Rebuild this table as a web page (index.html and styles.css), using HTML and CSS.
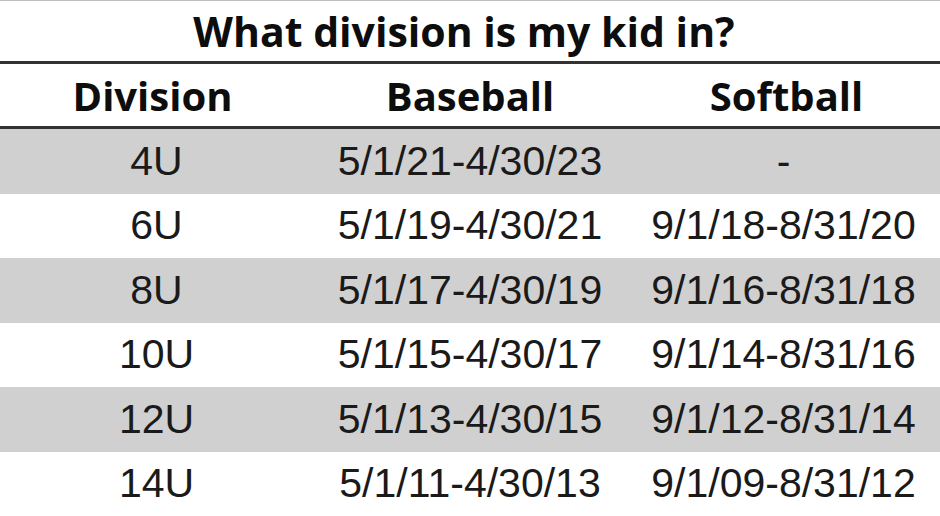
FILE: index.html
```html
<!DOCTYPE html>
<html>
<head>
<meta charset="utf-8">
<link rel="stylesheet" href="styles.css">
</head>
<body>
<div class="sheet">
  <div class="title">What division is my kid in?</div>
  <div class="row head">
    <div class="cell">Division</div>
    <div class="cell">Baseball</div>
    <div class="cell">Softball</div>
  </div>
  <div class="row shade"><div class="cell">4U</div><div class="cell">5/1/21-4/30/23</div><div class="cell">-</div></div>
  <div class="row"><div class="cell">6U</div><div class="cell">5/1/19-4/30/21</div><div class="cell">9/1/18-8/31/20</div></div>
  <div class="row shade"><div class="cell">8U</div><div class="cell">5/1/17-4/30/19</div><div class="cell">9/1/16-8/31/18</div></div>
  <div class="row"><div class="cell">10U</div><div class="cell">5/1/15-4/30/17</div><div class="cell">9/1/14-8/31/16</div></div>
  <div class="row shade"><div class="cell">12U</div><div class="cell">5/1/13-4/30/15</div><div class="cell">9/1/12-8/31/14</div></div>
  <div class="row"><div class="cell">14U</div><div class="cell">5/1/11-4/30/13</div><div class="cell">9/1/09-8/31/12</div></div>
</div>
</body>
</html>
```
FILE: styles.css
```css
html, body {
  margin: 0;
  padding: 0;
  background: #ffffff;
  overflow: hidden;
}
.sheet {
  width: 940px;
  height: 516px;
  border-top: 1px solid #bdbdbd;
  box-sizing: border-box;
  overflow: hidden;
}
.title {
  height: 60px;
  display: flex;
  align-items: center;
  justify-content: center;
  font-family: "Open Sans", "Liberation Sans", sans-serif;
  font-weight: 700;
  font-size: 41px;
  color: #0d0d0d;
  border-bottom: 3px solid #333333;
  padding-right: 12px;
}
.row {
  display: grid;
  grid-template-columns: 313px 314px 313px;
  height: 64.5px;
  align-items: center;
}
.row.head {
  height: 62px;
  border-bottom: 3px solid #333333;
}
.head .cell {
  font-family: "Open Sans", "Liberation Sans", sans-serif;
  font-weight: 700;
  font-size: 40px;
  color: #0d0d0d;
}
.head .cell:first-child {
  padding-right: 8px;
}
.head .cell:last-child {
  padding-left: 6px;
}
.cell {
  text-align: center;
  font-family: "Liberation Sans", Arial, sans-serif;
  font-size: 41px;
  color: #1a1a1a;
}
.shade {
  background: #d0d0d0;
}
```
